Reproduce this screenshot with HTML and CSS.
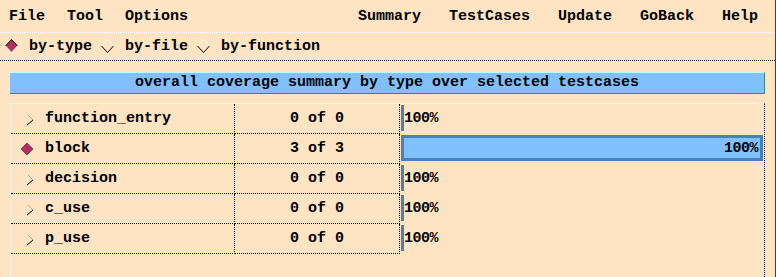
FILE: index.html
```html
<!DOCTYPE html>
<html>
<head>
<meta charset="utf-8">
<link rel="stylesheet" href="styles.css">
</head>
<body>
<div class="win">
  <div class="menubar">
    <div class="menu-left"><span>File</span><span>Tool</span><span>Options</span></div>
    <div class="menu-right"><span>Summary</span><span>TestCases</span><span>Update</span><span>GoBack</span><span>Help</span></div>
  </div>
  <div class="radiobar">
    <div class="radio">
      <svg class="rind" width="14" height="14" viewBox="0 0 14 14">
        <polygon points="6.5,0.5 12.5,7 6.5,13.5 0.5,7" fill="#b03060"/>
        <polyline points="0.5,7 6.5,0.5 12.5,7" fill="none" stroke="#000" stroke-width="1"/>
        <polyline points="0.5,7 6.5,13.5 12.5,7" fill="none" stroke="#fff" stroke-width="1"/>
      </svg>
      <span>by-type</span>
    </div>
    <div class="radio">
      <svg class="rind" width="14" height="14" viewBox="0 0 14 14">
        <polyline points="0.5,7 6.5,0.5 12.5,7" fill="none" stroke="#fff" stroke-width="1"/>
        <polyline points="0.5,7 6.5,13.5 12.5,7" fill="none" stroke="#000" stroke-width="1"/>
      </svg>
      <span>by-file</span>
    </div>
    <div class="radio">
      <svg class="rind" width="14" height="14" viewBox="0 0 14 14">
        <polyline points="0.5,7 6.5,0.5 12.5,7" fill="none" stroke="#fff" stroke-width="1"/>
        <polyline points="0.5,7 6.5,13.5 12.5,7" fill="none" stroke="#000" stroke-width="1"/>
      </svg>
      <span>by-function</span>
    </div>
  </div>
  <div class="title">overall coverage summary by type over selected testcases</div>
  <div class="table">
    <div class="row">
      <div class="name">
        <svg class="ind" width="14" height="14" viewBox="0 0 14 14"><polyline points="7,3 12,8" fill="none" stroke="#b8a890" stroke-width="1"/><polyline points="12,8 6,13" fill="none" stroke="#000" stroke-width="1"/></svg>
        <span>function_entry</span>
      </div>
      <div class="count">0 of 0</div>
      <div class="barcell"><div class="track"><div class="bar empty"></div><span class="pct">100%</span></div></div>
    </div>
    <div class="row">
      <div class="name">
        <svg class="ind" width="14" height="14" viewBox="0 0 14 14"><polygon points="6,1 12,7 6,13 0,7" fill="#b03060" stroke="#8a2048" stroke-width="0.8"/></svg>
        <span>block</span>
      </div>
      <div class="count">3 of 3</div>
      <div class="barcell"><div class="track"><div class="bar full"><span class="pct">100%</span></div></div></div>
    </div>
    <div class="row">
      <div class="name">
        <svg class="ind" width="14" height="14" viewBox="0 0 14 14"><polyline points="7,3 12,8" fill="none" stroke="#b8a890" stroke-width="1"/><polyline points="12,8 6,13" fill="none" stroke="#000" stroke-width="1"/></svg>
        <span>decision</span>
      </div>
      <div class="count">0 of 0</div>
      <div class="barcell"><div class="track"><div class="bar empty"></div><span class="pct">100%</span></div></div>
    </div>
    <div class="row">
      <div class="name">
        <svg class="ind" width="14" height="14" viewBox="0 0 14 14"><polyline points="7,3 12,8" fill="none" stroke="#b8a890" stroke-width="1"/><polyline points="12,8 6,13" fill="none" stroke="#000" stroke-width="1"/></svg>
        <span>c_use</span>
      </div>
      <div class="count">0 of 0</div>
      <div class="barcell"><div class="track"><div class="bar empty"></div><span class="pct">100%</span></div></div>
    </div>
    <div class="row">
      <div class="name">
        <svg class="ind" width="14" height="14" viewBox="0 0 14 14"><polyline points="7,3 12,8" fill="none" stroke="#b8a890" stroke-width="1"/><polyline points="12,8 6,13" fill="none" stroke="#000" stroke-width="1"/></svg>
        <span>p_use</span>
      </div>
      <div class="count">0 of 0</div>
      <div class="barcell"><div class="track"><div class="bar empty"></div><span class="pct">100%</span></div></div>
    </div>
  </div>
</div>
</body>
</html>
```
FILE: styles.css
```css
html, body {
  margin: 0;
  padding: 0;
  background: #ffe4c4;
}
.win {
  width: 775px;
  height: 277px;
  border-right: 1px solid #e00000;
  font-family: "Liberation Mono", "DejaVu Sans Mono", monospace;
  font-weight: bold;
  font-size: 15px;
  color: #000;
  overflow: hidden;
  display: flex;
  flex-direction: column;
}
.menubar {
  height: 31px;
  border-bottom: 1px dotted #fff;
  display: flex;
  justify-content: space-between;
  align-items: center;
  padding-top: 1px;
  box-sizing: content-box;
}
.menu-left {
  display: flex;
  gap: 22px;
  padding-left: 9px;
}
.menu-right {
  display: flex;
  gap: 28px;
  padding-right: 17px;
}
.radiobar {
  width: 775px;
  height: 28px;
  box-sizing: content-box;
  border-bottom: 1px dotted #000;
  border-right: 1px dotted #000;
  display: flex;
  align-items: center;
  padding-left: 5px;
  gap: 9px;
  margin-top: -1px;
}
.radio {
  display: flex;
  align-items: center;
  gap: 10px;
}
.rind {
  display: block;
}
.title {
  margin: 11px 0 0 10px;
  width: 755px;
  height: 22px;
  box-sizing: border-box;
  background: #80c0ff;
  border-top: 1px solid #c0ffff;
  border-bottom: 1px solid #408080;
  border-right: 1px solid #408080;
  text-align: center;
  line-height: 20px;
}
.table {
  margin: 9px 0 0 10px;
  width: 755px;
  box-sizing: border-box;
  border-top: 1px dotted #fff;
  border-left: 1px dotted #fff;
  border-right: 1px dotted #000;
  flex: 1;
}
.row {
  display: flex;
  height: 30px;
}
.name {
  width: 224px;
  box-sizing: border-box;
  border-right: 1px dotted #000;
  border-bottom: 1px dotted #000;
  display: flex;
  align-items: center;
  padding-left: 10px;
  gap: 10px;
}
.ind {
  display: block;
}
.count {
  width: 165px;
  box-sizing: border-box;
  border-right: 1px dotted #000;
  border-bottom: 1px dotted #000;
  display: flex;
  align-items: center;
  justify-content: center;
}
.barcell {
  flex: 1;
  padding: 1px 1px 0 1px;
}
.track {
  height: 26px;
  display: flex;
  align-items: center;
}
.bar {
  height: 26px;
  box-sizing: border-box;
}
.bar.empty {
  width: 3px;
  background: #4682b4;
}
.bar.full {
  width: 100%;
  border: 3px solid #4682b4;
  background: #80c0ff;
  display: flex;
  align-items: center;
  justify-content: flex-end;
  padding-right: 2px;
}
.pct {
  letter-spacing: -0.5px;
}
```
